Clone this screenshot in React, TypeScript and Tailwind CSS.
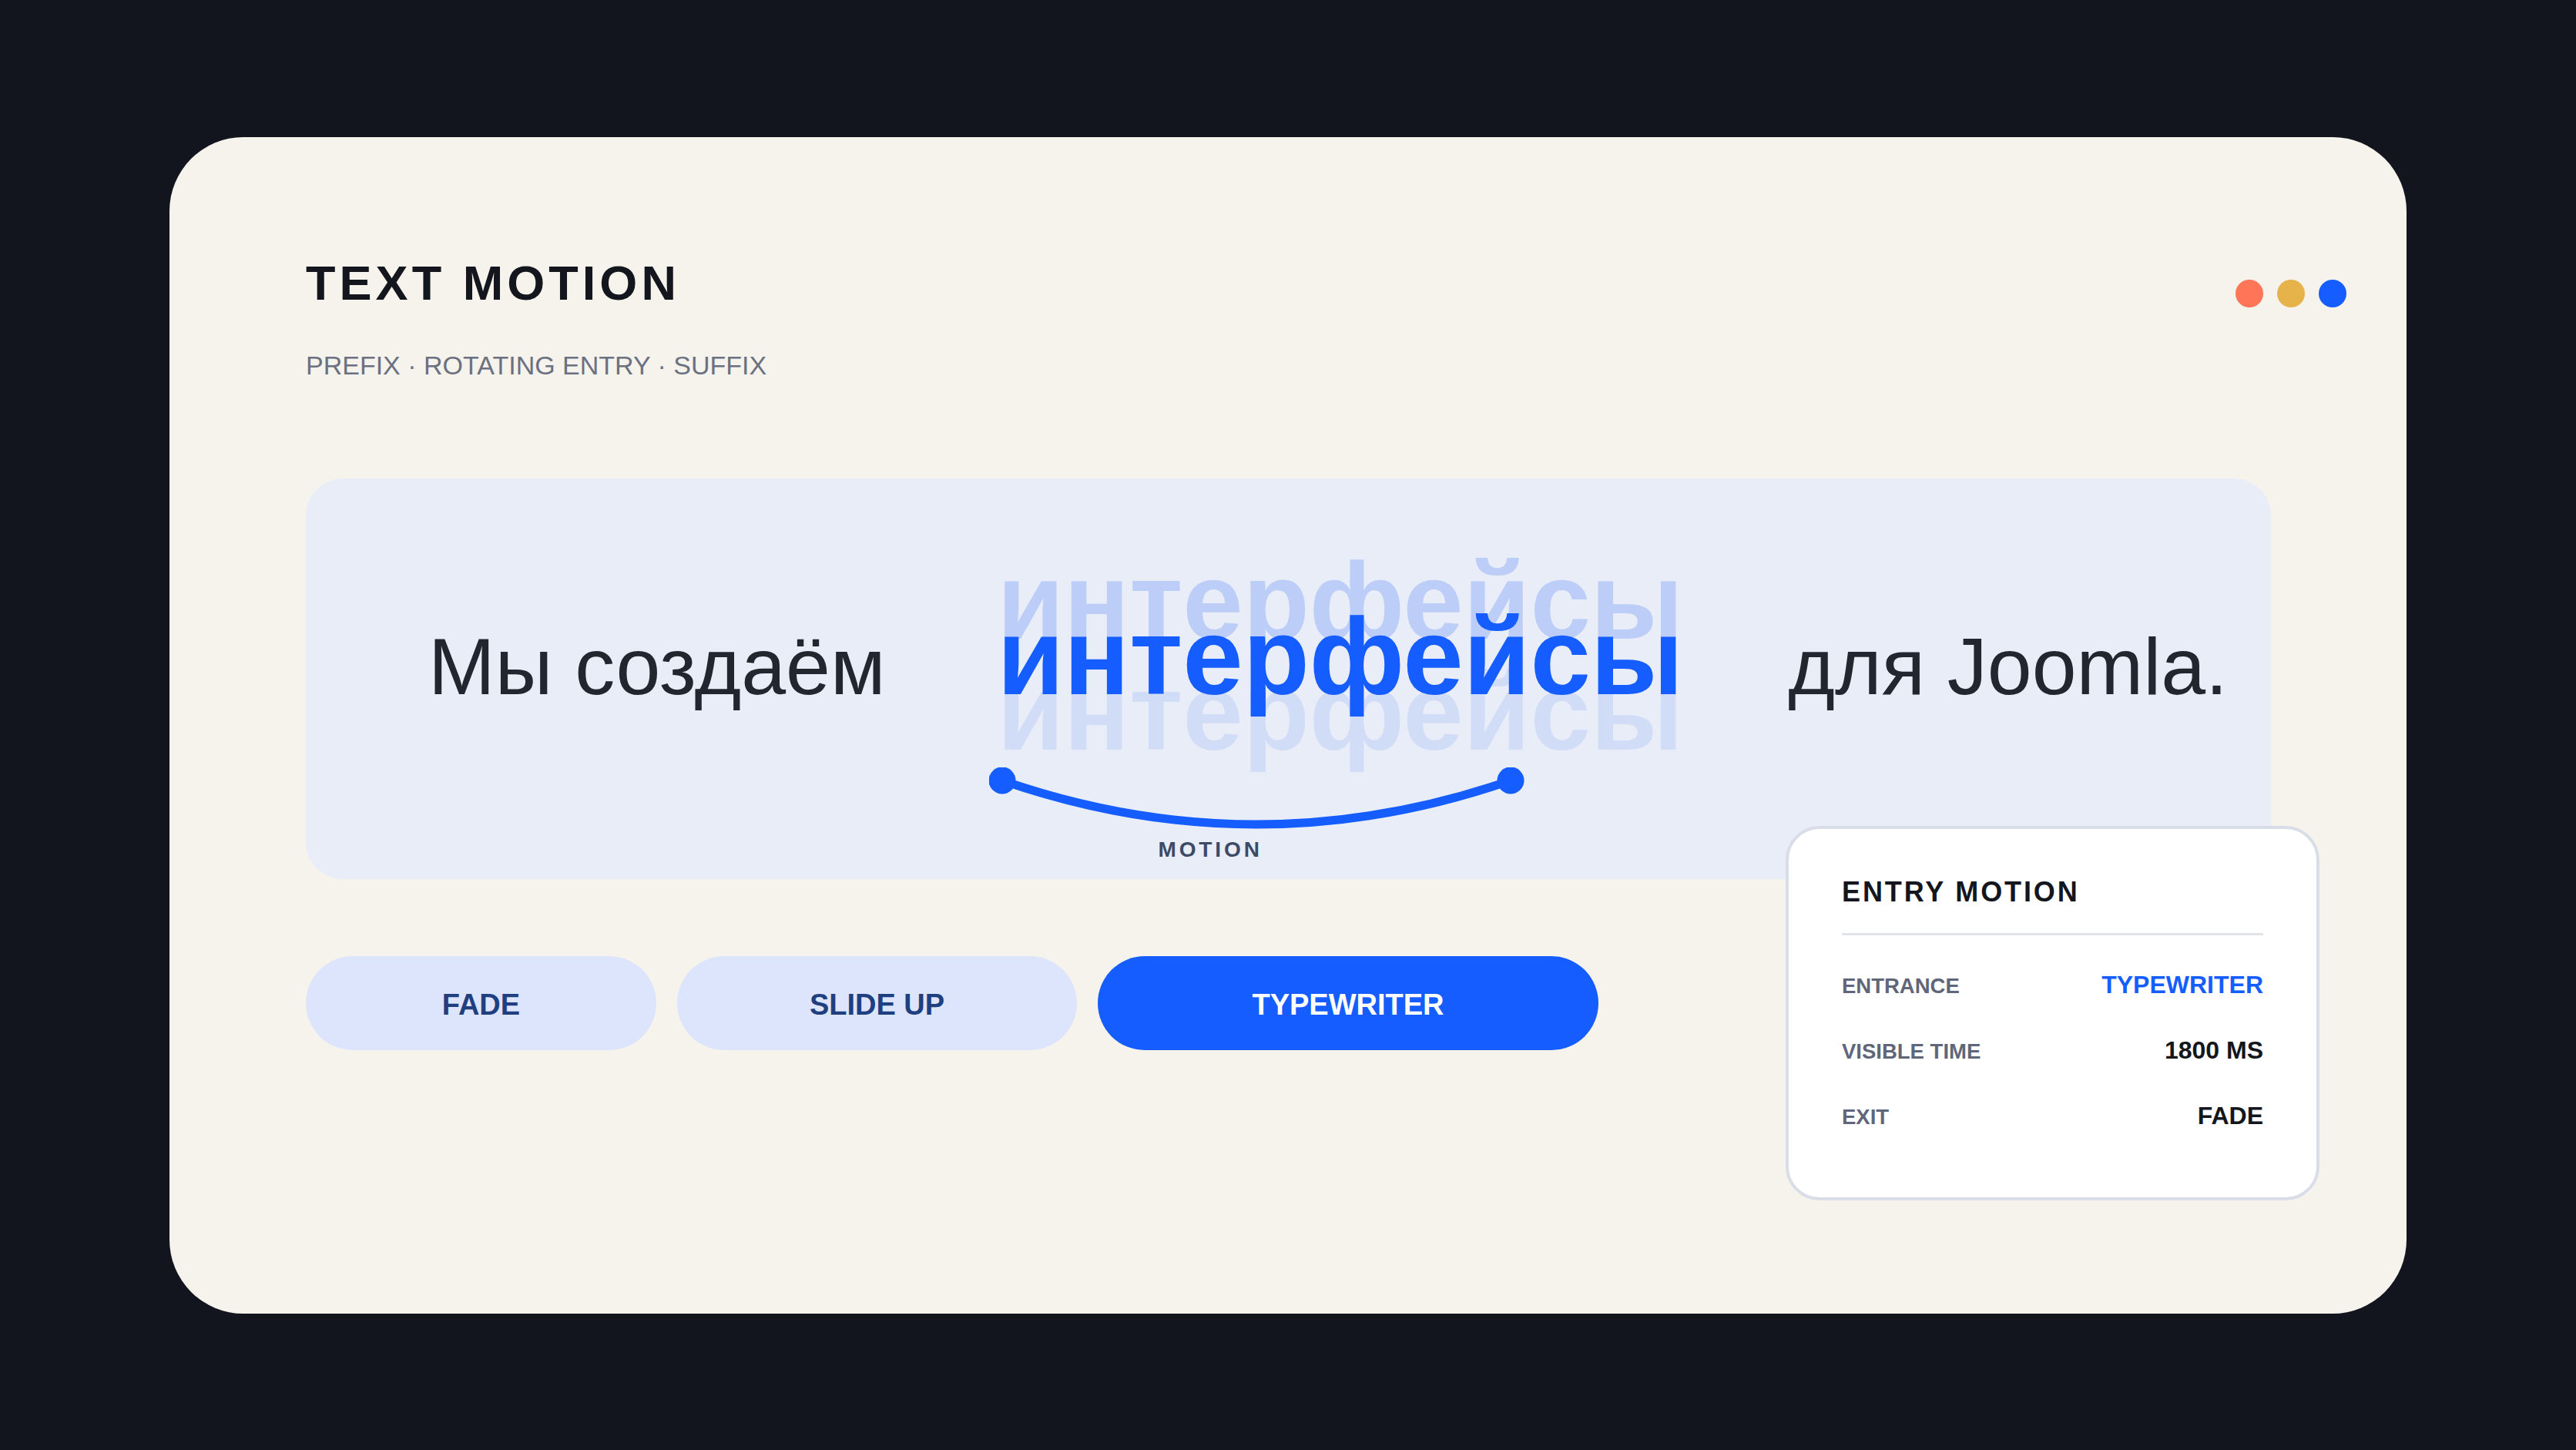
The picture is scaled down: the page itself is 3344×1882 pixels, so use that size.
import React from "react";

const font = { fontFamily: '"Liberation Sans", Arial, sans-serif' };

export default function App() {
  return (
    <div
      className="flex h-[1882px] w-full items-center justify-center bg-[#12151e]"
      style={font}
    >
      <div className="flex h-[1527px] w-[2904px] flex-col rounded-[96px] bg-[#f6f3ec] pl-[177px] pr-[78px] pt-[158px]">
        {/* header */}
        <div className="flex items-start justify-between">
          <div className="flex flex-col">
            <h1 className="text-[63px] font-bold leading-none tracking-[0.08em] text-[#14161d]">
              TEXT MOTION
            </h1>
            <p className="mt-[58px] text-[34px] leading-none text-[#6b7181]">
              PREFIX · ROTATING ENTRY · SUFFIX
            </p>
          </div>
          <div className="mt-[27px] flex gap-[18px]">
            <span className="h-[36px] w-[36px] rounded-full bg-[#ff7557]" />
            <span className="h-[36px] w-[36px] rounded-full bg-[#e6b24a]" />
            <span className="h-[36px] w-[36px] rounded-full bg-[#165dff]" />
          </div>
        </div>

        {/* content */}
        <div className="relative mt-[130px] w-[2551px]">
          <div className="flex h-[520px] items-baseline rounded-[48px] bg-[#e8edf7] pl-[159px] pt-[161px]">
            <span className="whitespace-nowrap text-[104px] leading-none text-[#22262f]">
              Мы создаём
            </span>
            <span className="relative ml-[145px] whitespace-nowrap text-[141px] font-bold leading-none">
              <span className="absolute left-0 top-[-72px] text-[#bccdf7]">интерфейсы</span>
              <span className="absolute left-0 top-[72px] text-[#d1dcf6]">интерфейсы</span>
              <span className="relative text-[#165dff]">интерфейсы</span>
              <svg
                className="absolute left-[-10px] top-[214px]"
                width="700"
                height="100"
                viewBox="0 0 700 100"
              >
                <path
                  d="M17 17 Q347 131 677 17"
                  fill="none"
                  stroke="#165dff"
                  strokeWidth="11"
                />
                <circle cx="17" cy="17" r="17.5" fill="#165dff" />
                <circle cx="677" cy="17" r="17.5" fill="#165dff" />
              </svg>
              <span className="absolute left-[209px] top-[307px] text-[28px] font-bold leading-none tracking-[0.14em] text-[#3c4a66]">
                MOTION
              </span>
            </span>
            <span className="ml-[136px] whitespace-nowrap text-[104px] leading-none text-[#22262f]">
              для Joomla.
            </span>
          </div>

          {/* buttons */}
          <div className="mt-[100px] flex gap-[27px]">
            <button className="flex h-[122px] w-[455px] items-center justify-center rounded-full bg-[#dce5fc] pt-[6px] text-[38px] font-bold text-[#1f3f7f]">
              FADE
            </button>
            <button className="flex h-[122px] w-[519px] items-center justify-center rounded-full bg-[#dce5fc] pt-[6px] text-[38px] font-bold text-[#1f3f7f]">
              SLIDE UP
            </button>
            <button className="flex h-[122px] w-[650px] items-center justify-center rounded-full bg-[#165dff] pt-[6px] text-[38px] font-bold text-white">
              TYPEWRITER
            </button>
          </div>

          {/* entry motion card */}
          <div className="absolute left-[1921px] top-[451px] flex w-[693px] flex-col rounded-[44px] border-[4px] border-[#d9dde8] bg-white px-[69px] pb-[90px] pt-[64px]">
            <div className="text-[36px] font-bold leading-none tracking-[0.08em] text-[#14161d]">
              ENTRY MOTION
            </div>
            <div className="mt-[35px] h-[3px] bg-[#e2e4ea]" />
            <div className="mt-[48px] flex flex-col gap-[53px]">
              <div className="flex items-baseline justify-between">
                <span className="text-[27.5px] font-bold leading-none text-[#5f6679]">ENTRANCE</span>
                <span className="text-[32px] font-bold leading-none text-[#165dff]">TYPEWRITER</span>
              </div>
              <div className="flex items-baseline justify-between">
                <span className="text-[27.5px] font-bold leading-none text-[#5f6679]">VISIBLE TIME</span>
                <span className="text-[32px] font-bold leading-none text-[#14161d]">1800 MS</span>
              </div>
              <div className="flex items-baseline justify-between">
                <span className="text-[27.5px] font-bold leading-none text-[#5f6679]">EXIT</span>
                <span className="text-[32px] font-bold leading-none text-[#14161d]">FADE</span>
              </div>
            </div>
          </div>
        </div>
      </div>
    </div>
  );
}
